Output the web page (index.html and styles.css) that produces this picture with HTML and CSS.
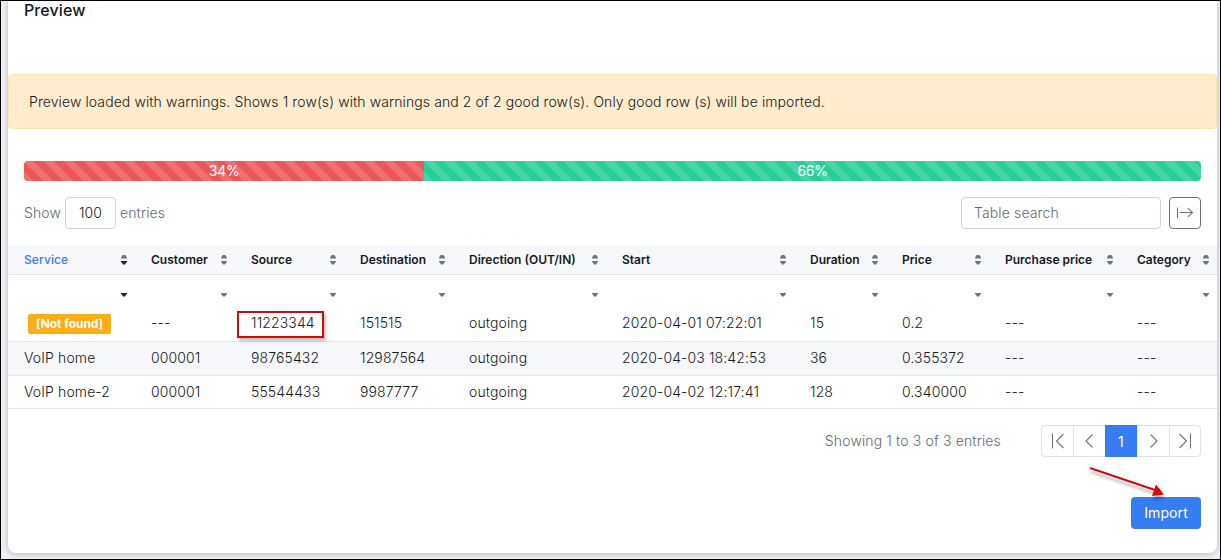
FILE: index.html
```html
<!DOCTYPE html>
<html lang="en">
<head>
<meta charset="utf-8">
<title>Preview</title>
<link rel="stylesheet" href="styles.css">
</head>
<body>
<div class="frame">
  <main class="card">
    <h1 class="card-title">Preview</h1>
    <div class="alert">Preview loaded with warnings. Shows 1 row(s) with warnings and 2 of 2 good row(s). Only good row (s) will be imported.</div>
    <div class="progress">
      <div class="bar bar-danger" style="width:34%">34%</div>
      <div class="bar bar-success" style="width:66%">66%</div>
    </div>
    <div class="toolbar">
      <div class="length"><span class="label">Show</span><span class="select">100</span><span class="label">entries</span></div>
      <div class="tools">
        <input class="search" type="text" placeholder="Table search" aria-label="Table search">
        <button class="btn-icon" aria-label="Expand columns">
          <svg width="18" height="14" viewBox="0 0 18 14"><path d="M1.5 1.5v11M3.5 6.500h13M12 2.200 16.500 6.500 12 10.800"/></svg>
        </button>
      </div>
    </div>
    <table class="grid">
      <colgroup>
        <col class="c1"><col class="c2"><col class="c3"><col class="c4"><col class="c5"><col class="c6"><col class="c7"><col class="c8"><col class="c9"><col class="c10">
      </colgroup>
      <thead>
        <tr class="heads">
          <th class="sorted"><div class="head">Service<i class="sort"></i></div></th>
          <th><div class="head">Customer<i class="sort"></i></div></th>
          <th><div class="head">Source<i class="sort"></i></div></th>
          <th><div class="head">Destination<i class="sort"></i></div></th>
          <th><div class="head">Direction (OUT/IN)<i class="sort"></i></div></th>
          <th><div class="head">Start<i class="sort"></i></div></th>
          <th><div class="head">Duration<i class="sort"></i></div></th>
          <th><div class="head">Price<i class="sort"></i></div></th>
          <th><div class="head">Purchase price<i class="sort"></i></div></th>
          <th><div class="head">Category<i class="sort"></i></div></th>
        </tr>
        <tr class="filters">
          <th class="sorted"><div class="head"><i class="sort down"></i></div></th>
          <th><div class="head"><i class="sort down"></i></div></th>
          <th><div class="head"><i class="sort down"></i></div></th>
          <th><div class="head"><i class="sort down"></i></div></th>
          <th><div class="head"><i class="sort down"></i></div></th>
          <th><div class="head"><i class="sort down"></i></div></th>
          <th><div class="head"><i class="sort down"></i></div></th>
          <th><div class="head"><i class="sort down"></i></div></th>
          <th><div class="head"><i class="sort down"></i></div></th>
          <th><div class="head"><i class="sort down"></i></div></th>
        </tr>
      </thead>
      <tbody>
        <tr class="first"><td><span class="badge">[Not found]</span></td><td>---</td><td><span class="marked">11223344</span></td><td>151515</td><td>outgoing</td><td>2020-04-01 07:22:01</td><td>15</td><td>0.2</td><td>---</td><td>---</td></tr>
        <tr class="striped"><td>VoIP home</td><td>000001</td><td>98765432</td><td>12987564</td><td>outgoing</td><td>2020-04-03 18:42:53</td><td>36</td><td>0.355372</td><td>---</td><td>---</td></tr>
        <tr class="last"><td>VoIP home-2</td><td>000001</td><td>55544433</td><td>9987777</td><td>outgoing</td><td>2020-04-02 12:17:41</td><td>128</td><td>0.340000</td><td>---</td><td>---</td></tr>
      </tbody>
    </table>
    <div class="footer">
      <span class="info">Showing 1 to 3 of 3 entries</span>
      <nav class="pager">
        <a class="page"><svg width="16" height="16" viewBox="0 0 16 16"><path d="M2.5 .5v15M13.500 1 6.500 8l7 7"/></svg></a>
        <a class="page"><svg width="16" height="16" viewBox="0 0 16 16"><path d="M10.500 1.500 4 8l6.500 6.500"/></svg></a>
        <a class="page active">1</a>
        <a class="page"><svg width="16" height="16" viewBox="0 0 16 16"><path d="M4.500 1.500 11 8l-6.500 6.500"/></svg></a>
        <a class="page"><svg width="16" height="16" viewBox="0 0 16 16"><path d="M13.500 .5v15M2.500 1l7 7-7 7"/></svg></a>
      </nav>
    </div>
    <div class="actions">
      <button class="btn-primary">Import</button>
      <svg class="arrow" width="90" height="44" viewBox="0 0 90 44"><path class="shaft" d="M5 5 70 27"/><path class="tip" d="M71 21.500 79 31.500 67 33z"/></svg>
    </div>
  </main>
</div>
</body>
</html>
```

FILE: styles.css
```css
*, *::before, *::after { box-sizing: border-box; }

body {
  margin: 0;
  font-family: Inter, "Liberation Sans", sans-serif;
  font-size: 14px;
  font-weight: 300;
  line-height: 21px;
  letter-spacing: .12px;
  color: #16191c;
}

.frame {
  width: 1221px;
  height: 560px;
  border: 1px solid #000;
  padding: 0 3px 6px 7px;
  background: #f1f1f6;
  overflow: hidden;
}

.card {
  width: 1209px;
  height: 552px;
  background: #fff;
  border-radius: 0 0 8px 8px;
  box-shadow: 0 1px 6px rgba(40, 44, 60, .3);
}

.card-title {
  margin: 0;
  height: 73px;
  padding: 0 16px;
  font-size: 16px;
  line-height: 19px;
  font-weight: 550;
  letter-spacing: .1px;
}

.alert {
  height: 55px;
  padding: 17px 20px;
  border: 1px solid #ffe4b1;
  border-radius: 4px;
  background: #ffeccf;
  line-height: 20px;
  letter-spacing: .095px;
}

.progress {
  display: flex;
  height: 20px;
  margin: 32px 16px 16px;
  border-radius: 4px;
  overflow: hidden;
}

.bar {
  color: #fff;
  text-align: center;
  line-height: 20px;
  font-weight: 400;
  letter-spacing: -.3px;
  background-image: linear-gradient(45deg, rgba(255,255,255,.15) 25%, transparent 25%, transparent 50%, rgba(255,255,255,.15) 50%, rgba(255,255,255,.15) 75%, transparent 75%, transparent);
  background-size: 20px 20px;
}
.bar-danger { background-color: #eb5757; }
.bar-success { background-color: #27ce98; }

.toolbar {
  display: flex;
  justify-content: space-between;
  height: 32px;
  margin: 0 16px 16px;
  color: #626b73;
}
.length { display: flex; align-items: center; gap: 4px; }
.label { padding-bottom: 1px; }
.select {
  width: 51px;
  height: 32px;
  border: 1px solid #ced4da;
  border-radius: 4px;
  line-height: 30px;
  text-align: center;
  color: #16191c;
}
.tools { display: flex; gap: 8px; }
.search {
  width: 200px;
  height: 32px;
  padding: 0 12px 1px;
  border: 1px solid #ced4da;
  border-radius: 4px;
  font: inherit;
  letter-spacing: inherit;
}
.search::placeholder { color: #626b73; opacity: 1; }
.btn-icon {
  display: flex;
  align-items: center;
  justify-content: center;
  width: 32px;
  height: 32px;
  padding: 0;
  border: 1px solid #6c757d;
  border-radius: 4px;
  background: #fff;
}
svg { fill: none; stroke: #6c757d; stroke-width: 1.1; }

.grid {
  width: 1209px;
  table-layout: fixed;
  border-collapse: separate;
  border-spacing: 0;
}
.c1 { width: 127px; }
.c2 { width: 100px; }
.c3 { width: 109px; }
.c4 { width: 109px; }
.c5 { width: 153px; }
.c6 { width: 188px; }
.c7 { width: 92px; }
.c8 { width: 103px; }
.c9 { width: 132px; }
.c10 { width: 96px; }

th, td { padding: 0 0 0 16px; text-align: left; white-space: nowrap; }
th { font-size: 12px; font-weight: 600; line-height: 18px; letter-spacing: 0; }
.heads { height: 30px; background: #f6f8fc; }
.heads th { border-bottom: 1px solid #e4e7eb; }
.filters { height: 32px; }
.filters .head { padding-top: 1px; }
.heads .sorted { color: #367cf3; font-weight: 550; letter-spacing: .1px; }
.head { display: flex; align-items: center; justify-content: space-between; height: 18px; padding-right: 8px; }

.sort {
  display: grid;
  grid-template-rows: 4px 4px;
  row-gap: 2px;
  width: 6px;
  margin-left: auto;
  color: #6c757d;
}
.sort::before, .sort::after { content: ""; background: currentColor; height: 4px; }
.sort::before { clip-path: polygon(2px 0, 4px 0, 6px 3px, 6px 4px, 0 4px, 0 3px); }
.sort::after { clip-path: polygon(0 0, 6px 0, 6px 1px, 4px 4px, 2px 4px, 0 1px); }
.sorted .sort::after { background: #212529; }
.down::before { visibility: hidden; }

td { border-bottom: 1px solid #e4e7eb; padding-bottom: 2px; }
.first { height: 35px; }
.first td { padding-bottom: 3px; }
.first td:first-child { padding-bottom: 0; }
.striped { height: 34px; background: #f6f8fc; }
.last { height: 33px; }
.badge {
  display: block;
  width: 83px;
  height: 20px;
  margin-left: 4px;
  border-radius: 2px;
  background: #ffad16;
  color: #fff;
  font-size: 12px;
  font-weight: 700;
  line-height: 20px;
  letter-spacing: -.05px;
  text-align: center;
}
.marked { position: relative; }
.marked::after {
  content: "";
  position: absolute;
  left: -14px;
  top: -3px;
  width: 87px;
  height: 27px;
  border: 2px solid #d10a0a;
  box-shadow: 2px 3px 3px rgba(0, 0, 0, .25);
}

.footer {
  display: flex;
  align-items: center;
  justify-content: flex-end;
  gap: 40px;
  height: 32px;
  margin: 16px 16px 40px;
}
.info { color: #626b73; padding-bottom: 1px; letter-spacing: .14px; }
.pager { display: flex; height: 32px; }
.page {
  display: flex;
  width: 32px;
  align-items: center;
  justify-content: center;
  border: 1px solid #dee2e6;
  border-right-width: 0;
}
.page:first-child { border-radius: 4px 0 0 4px; }
.page:last-child { border-right-width: 1px; border-radius: 0 4px 4px 0; }
.active { padding-right: 1px; background: #367cf3; border-color: #367cf3; color: #fff; font-weight: 400; }

.actions { position: relative; display: flex; justify-content: flex-end; margin: 0 16px; }
.btn-primary {
  width: 70px;
  height: 32px;
  padding: 0;
  border: 0;
  border-radius: 4px;
  background: #367cf3;
  color: #fff;
  font: 400 14px/32px Inter, sans-serif;
  letter-spacing: .1px;
}
.arrow { position: absolute; right: 26px; top: -34px; filter: drop-shadow(1px 4px 1px rgba(0, 0, 0, .25)); }
.shaft { stroke: #d10a0a; stroke-width: 2; }
.tip { fill: #d10a0a; stroke: none; }
```
